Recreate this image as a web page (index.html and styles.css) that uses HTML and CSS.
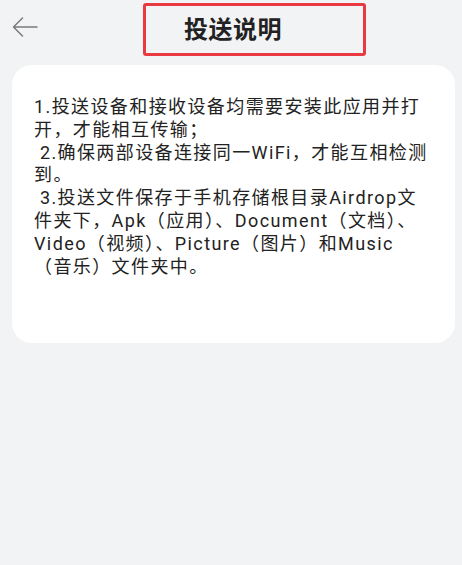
FILE: index.html
```html
<!DOCTYPE html>
<html lang="zh-CN">
<head>
<meta charset="utf-8">
<link rel="stylesheet" href="styles.css">
</head>
<body>
<header class="topbar">
  <span class="back">
    <svg width="26" height="20" viewBox="0 0 26 20"><path d="M25 10H1.5M10.5 1L1.5 10L10.5 19" fill="none" stroke="#7a7a7a" stroke-width="1.5" stroke-linecap="round" stroke-linejoin="round"/></svg>
  </span>
  <h1 class="title">投送说明</h1>
  <span class="mark"></span>
</header>
<main class="card">
<p class="desc">1.投送设备和接收设备均需要安装此应用并打开，才能相互传输；
 2.确保两部设备连接同一WiFi，才能互相检测到。
 3.投送文件保存于手机存储根目录Airdrop文件夹下，Apk（应用）、Document（文档）、Video（视频）、Picture（图片）和Music（音乐）文件夹中。</p>
</main>
</body>
</html>
```
FILE: styles.css
```css
html, body {
  margin: 0;
  padding: 0;
}
body {
  background: #f2f3f5;
  width: 462px;
  height: 565px;
  font-family: Roboto, "Noto Sans CJK SC", sans-serif;
  color: #222;
}
.topbar {
  position: relative;
  height: 56px;
  display: flex;
  align-items: center;
  justify-content: center;
}
.back {
  position: absolute;
  left: 12px;
  top: 17px;
  display: flex;
}
.title {
  margin: 0;
  font-family: "Noto Sans CJK SC", sans-serif;
  font-size: 24px;
  font-weight: 700;
  letter-spacing: 0.5px;
  line-height: 30px;
  padding-left: 4px;
  color: #222;
}
.mark {
  position: absolute;
  left: 143px;
  top: 3px;
  width: 223px;
  height: 53px;
  box-sizing: border-box;
  border: 3px solid #e83a40;
  border-radius: 3px;
}
.card {
  margin: 9px 7px 0 12px;
  height: 278px;
  box-sizing: border-box;
  background: #fff;
  border-radius: 20px;
  padding: 31px 27px 0 22px;
}
.desc {
  margin: 0;
  white-space: pre-wrap;
  font-size: 18px;
  letter-spacing: 1.4px;
  line-height: 22.8px;
  color: #222;
}
```
